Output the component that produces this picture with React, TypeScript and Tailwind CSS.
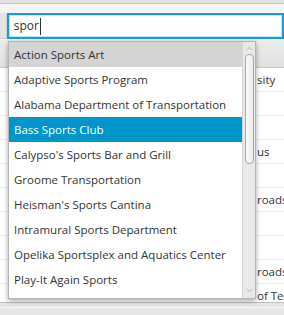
import { ChevronUp, ChevronDown } from "lucide-react";

const items = [
  "Action Sports Art",
  "Adaptive Sports Program",
  "Alabama Department of Transportation",
  "Bass Sports Club",
  "Calypso's Sports Bar and Grill",
  "Groome Transportation",
  "Heisman's Sports Cantina",
  "Intramural Sports Department",
  "Opelika Sportsplex and Aquatics Center",
  "Play-It Again Sports",
];

// only the tail of each table cell shows past the popup
const rows = ["sity", "", "", "us", "", "roads", "", "", "roads", "of Tec", ""];

const App = () => {
  return (
    <div
      className="relative w-[284px] h-[315px] overflow-hidden bg-[#f4f4f4] text-[#333333] flex flex-col"
      style={{ fontFamily: '"Open Sans", "Noto Sans", sans-serif' }}
    >
      {/* window top strip */}
      <div className="h-[4px] shrink-0 bg-[#e0e0e0] border-b border-[#c4c4c4]" />

      {/* search toolbar */}
      <div className="h-[36px] shrink-0 flex items-start pt-[9px]">
        <div className="w-[7px] h-[26px] bg-[#e4e4e4] border-r border-b border-[#cfcfcf]" />
        <div className="w-[290px] h-[26px] border-2 border-[#1a9ad6] bg-white flex items-center pl-[5px] shadow-[inset_0_0_0_1px_#bfe6f6]">
          <span className="text-[12px] leading-none">spor</span>
          <span className="w-px h-[17px] bg-[#333] ml-px" />
        </div>
      </div>

      {/* table behind */}
      <div className="flex-1 min-h-0 flex flex-col bg-white overflow-hidden">
        <div className="h-[28px] shrink-0 bg-gradient-to-b from-[#ececec] to-[#e0e0e0] border-b border-[#c8c8c8]" />
        {rows.map((t, i) => (
          <div
            key={i}
            className="h-[24px] shrink-0 border-b border-[#ececec] flex items-center pl-[257px] text-[11.5px] whitespace-nowrap"
          >
            {t}
          </div>
        ))}
      </div>

      {/* bottom bar */}
      <div className="h-[13px] shrink-0 bg-[#e6e6e6] border-t border-[#bdbdbd] flex flex-col">
        <div className="h-[5px] border-b border-[#f6f6f6]" />
      </div>

      {/* autocomplete popup */}
      <div className="absolute left-[8px] top-[41px] w-[248px] h-[258px] bg-white border border-[#b4b4b4] shadow-[0_2px_5px_rgba(0,0,0,0.35)] flex">
        <div className="flex-1 flex flex-col overflow-hidden">
          {items.map((it, i) => (
            <div
              key={it}
              className={
                "h-[25px] shrink-0 flex items-center pl-[5px] text-[11.5px] whitespace-nowrap " +
                (i === 0 ? "bg-[#d4d4d4]" : i === 3 ? "bg-[#0096c9] text-white" : "")
              }
            >
              {it}
            </div>
          ))}
        </div>
        <div className="w-[13px] bg-[#e8e8e8] border-l border-[#d6d6d6] flex flex-col items-center">
          <ChevronUp size={9} strokeWidth={1.5} className="mt-[2px] text-[#8a8a8a]" />
          <div className="mt-px w-[9px] h-[110px] rounded-[4px] border border-[#a8a8a8] bg-gradient-to-r from-[#fafafa] to-[#ececec]" />
          <div className="flex-1" />
          <ChevronDown size={9} strokeWidth={1.5} className="mb-[3px] text-[#8a8a8a]" />
        </div>
      </div>
    </div>
  );
};

export default App;
